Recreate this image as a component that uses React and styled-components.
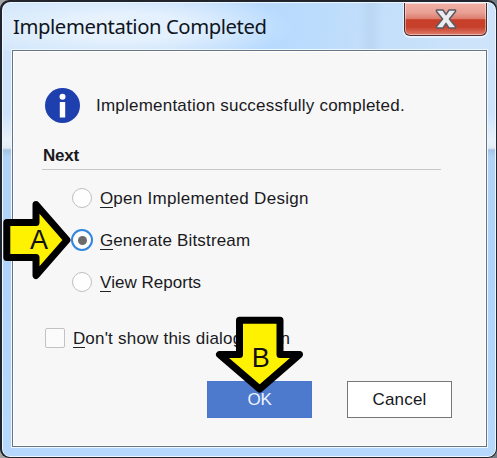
import React from "react";
import styled, { createGlobalStyle } from "styled-components";

const Global = createGlobalStyle`
  * { box-sizing: border-box; }
  html, body { margin: 0; overflow: hidden; }
  body { background: #8d9298; }
`;

const Screen = styled.main`
  position: relative;
  width: 497px;
  height: 458px;
  overflow: hidden;
  background: linear-gradient(90deg, #a5a5a5, #777d84);
  font-family: "Liberation Sans", Arial, sans-serif;
  font-size: 17px;
  color: #1a1a1e;
`;

const WindowFrame = styled.section`
  height: 458px;
  padding: 2px 1px 1px 2px;
  border-radius: 9px;
  background: #20242d;
`;

const Glass = styled.div`
  height: 455px;
  padding: 0 8px 9px 9px;
  display: flex;
  flex-direction: column;
  border: 1px solid #eef7ff;
  border-radius: 8px;
  background:
    linear-gradient(90deg, transparent 355px, #a9c5e255 367px, transparent 380px) 0 0 / 100% 46px no-repeat,
    radial-gradient(ellipse 190px 44px at 130px 24px, #ffffff90 30%, #ffffff00 85%) 0 0 / 100% 48px no-repeat,
    linear-gradient(100deg, #d4e8fb 0, #c4dffb 26%, #b7dafe 55%, #c3dffa 76%, #cfe4fa 100%) 0 0 / 100% 48px no-repeat,
    linear-gradient(#cfe4fa 48px, #cce3fb 110px, #e9f2fa 138px, #e3ecf5 145px, #a5c3e3 147px, #b1d3f7 154px, #afd3fa 275px, #b6d8fc 100%);
`;

const TitleBar = styled.header`
  height: 47px;
  flex: none;
  display: flex;
  align-items: flex-start;
  justify-content: space-between;
`;

const Title = styled.h1`
  margin: 9px 0 0 1px;
  font: 400 20.3px/28px "Noto Sans", sans-serif;
  letter-spacing: -0.42px;
  color: #10151d;
  white-space: nowrap;
`;

const CloseButton = styled.button`
  width: 83px;
  height: 33px;
  margin: 0;
  padding: 0;
  display: flex;
  align-items: center;
  justify-content: center;
  border: 1px solid #502c32;
  border-top: 0;
  border-radius: 0 0 6px 6px;
  background: linear-gradient(#f2b0a6 0, #e9a094 30%, #dc7b6b 50%, #c83e29 52%, #c6402b 75%, #df7c6b 100%);
  box-shadow: inset 0 0 0 1px #ffffff70, 0 1px 0 1px #eef7ffc0;
`;

const Panel = styled.div`
  flex: 1;
  padding: 0 34px 0 29px;
  border: 1px solid #657483;
  box-shadow: 0 0 0 1px #eff8ff, inset 0 0 0 1px #ffffff;
  background: #f7f7f7;
`;

const Message = styled.div`
  height: 94px;
  padding: 37px 0 22px 3px;
  display: flex;
  align-items: center;
  gap: 16px;
`;

const Text = styled.span`
  letter-spacing: ${(p) => p.$spacing || "0px"};
  line-height: 20px;
  white-space: nowrap;
`;

const SectionTitle = styled.h2`
  margin: 0;
  padding: 1px 0 0 1px;
  font-size: 17px;
  line-height: 20px;
  letter-spacing: -0.2px;
`;

const Divider = styled.hr`
  width: 399px;
  height: 1px;
  margin: 3px 0 7px;
  border: 0;
  background: #c9c9c9;
`;

const OptionRow = styled.label`
  height: ${(p) => p.$height}px;
  padding-left: ${(p) => p.$indent}px;
  display: flex;
  align-items: center;
  gap: 8px;
  ${Text} { padding-top: 2px; }
`;

const Radio = styled.span`
  width: 20px;
  height: 20px;
  flex: none;
  display: grid;
  place-items: center;
  border: 1.5px solid #bfbfbf;
  border-radius: 50%;
  background: #fefefe;
  ${(p) => p.$selected && `
    width: 22px;
    height: 22px;
    margin: 0 -1px;
    border: 2px solid #3385df;
    &::after {
      content: "";
      width: 9px;
      height: 9px;
      border-radius: 50%;
      background: #6b6b6b;
    }
  `}
`;

const Checkbox = styled.span`
  width: 20px;
  height: 20px;
  flex: none;
  border: 1px solid #c2c2c2;
  border-radius: 2px;
  background: #fbfbfb;
`;

const AccessKey = styled.span`
  display: inline-block;
  height: 19px;
  letter-spacing: 0;
  border-bottom: 1px solid #222;
`;

const Actions = styled.footer`
  margin-top: 8px;
  display: flex;
  justify-content: flex-end;
  gap: 35px;
`;

const Button = styled.button`
  width: 105px;
  height: 37px;
  padding: 1px 0 0;
  border: 1px solid ${(p) => (p.$primary ? "#4a77cd" : "#777")};
  background: ${(p) => (p.$primary ? "#4e7ace" : "#fff")};
  color: ${(p) => (p.$primary ? "#edf3ff" : "#17171c")};
  font: 17px "Liberation Sans", Arial, sans-serif;
  letter-spacing: ${(p) => (p.$primary ? "-0.2px" : "0.2px")};
`;

const Annotations = styled.svg`
  position: absolute;
  inset: 0;
  pointer-events: none;
`;

const Choice = ({ selected, text, spacing }) => (
  <OptionRow $height={42} $indent={30}>
    <Radio $selected={selected} />
    <Text $spacing={spacing}><AccessKey>{text[0]}</AccessKey>{text.slice(1)}</Text>
  </OptionRow>
);

export default function App() {
  return (
    <Screen>
      <Global />
      <WindowFrame>
        <Glass>
          <TitleBar>
            <Title>Implementation Completed</Title>
            <CloseButton aria-label="Close">
              <svg width="22" height="20" viewBox="0 0 22 20">
                <path d="M1.5 1H8l3 4.6L14 1h6.5v1.5L14.4 10l6.1 7.5V19H14l-3-4.6L8 19H1.5v-1.5L7.6 10 1.5 2.5Z" fill="#ececee" stroke="#585b66" strokeWidth="1.5" strokeLinejoin="round" />
              </svg>
            </CloseButton>
          </TitleBar>
          <Panel>
            <Message>
              <svg width="35" height="35" viewBox="0 0 35 35">
                <circle cx="17.5" cy="17.5" r="17.5" fill="#1e3fae" />
                <circle cx="17.5" cy="8.7" r="3" fill="#fff" />
                <rect x="14.8" y="14" width="5.4" height="15.5" rx=".6" fill="#fff" />
              </svg>
              <Text $spacing="0.22px">Implementation successfully completed.</Text>
            </Message>
            <SectionTitle>Next</SectionTitle>
            <Divider />
            <Choice text="Open Implemented Design" spacing="0.3px" />
            <Choice text="Generate Bitstream" spacing="0.17px" selected />
            <Choice text="View Reports" spacing="0px" />
            <OptionRow $height={70} $indent={3}>
              <Checkbox />
              <Text $spacing="0.22px"><AccessKey>D</AccessKey>on't show this dialog again</Text>
            </OptionRow>
            <Actions>
              <Button $primary>OK</Button>
              <Button>Cancel</Button>
            </Actions>
          </Panel>
        </Glass>
      </WindowFrame>
      <Annotations width="497" height="458" viewBox="0 0 497 458">
        <g fill="#fff200" stroke="#000" strokeWidth="7" strokeLinejoin="round">
          <path d="M6.8 222.5H36V204.5L67 240 36 275.5V257.5H6.8Z" />
          <path d="M239.5 320.2H280V354.5H299.5L259.7 389 219.5 354.5H239.5Z" />
        </g>
        <g fill="#111" fontFamily="Liberation Sans, Arial, sans-serif" fontSize="27" textAnchor="middle">
          <text x="39" y="249.3">A</text>
          <text x="260.7" y="366.5">B</text>
        </g>
      </Annotations>
    </Screen>
  );
}
